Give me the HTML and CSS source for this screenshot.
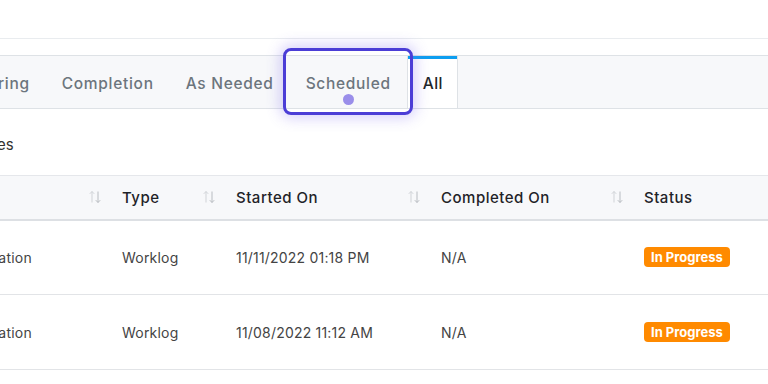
FILE: index.html
```html
<!DOCTYPE html>
<html lang="en">
<head>
    <meta charset="UTF-8">
    <meta name="viewport" content="width=device-width, initial-scale=1.0">
    <title>Activities</title>
    <link rel="stylesheet" href="styles.css">
</head>
<body>
    <div class="topbar"></div>

    <nav class="tabs">
        <div class="tab-list">
            <a class="tab">Recurring</a>
            <a class="tab">Completion</a>
            <a class="tab">As Needed</a>
            <a class="tab tab-focus">Scheduled<span class="focus-dot"></span></a>
            <a class="tab tab-active">All</a>
        </div>
    </nav>

    <div class="caption"><span class="caption-text">All Activities</span></div>

    <div class="table-wrap">
        <table class="grid">
            <colgroup>
                <col class="col-name">
                <col class="col-type">
                <col class="col-start">
                <col class="col-done">
                <col class="col-status">
            </colgroup>
            <thead>
                <tr>
                    <th><div class="th-in"><span>Activity</span><svg class="sort" viewBox="0 0 14 14"><path d="M4 1.5V12.5M1.8 3.8L4 1.5L6.2 3.8" class="up"/><path d="M10 1.5V12.5M7.8 10.2L10 12.5L12.2 10.2" class="down"/></svg></div></th>
                    <th><div class="th-in"><span>Type</span><svg class="sort" viewBox="0 0 14 14"><path d="M4 1.5V12.5M1.8 3.8L4 1.5L6.2 3.8" class="up"/><path d="M10 1.5V12.5M7.8 10.2L10 12.5L12.2 10.2" class="down"/></svg></div></th>
                    <th><div class="th-in"><span>Started On</span><svg class="sort" viewBox="0 0 14 14"><path d="M4 1.5V12.5M1.8 3.8L4 1.5L6.2 3.8" class="up"/><path d="M10 1.5V12.5M7.8 10.2L10 12.5L12.2 10.2" class="down"/></svg></div></th>
                    <th><div class="th-in"><span>Completed On</span><svg class="sort" viewBox="0 0 14 14"><path d="M4 1.5V12.5M1.8 3.8L4 1.5L6.2 3.8" class="up"/><path d="M10 1.5V12.5M7.8 10.2L10 12.5L12.2 10.2" class="down"/></svg></div></th>
                    <th><div class="th-in"><span>Status</span><svg class="sort" viewBox="0 0 14 14"><path d="M4 1.5V12.5M1.8 3.8L4 1.5L6.2 3.8" class="up"/><path d="M10 1.5V12.5M7.8 10.2L10 12.5L12.2 10.2" class="down"/></svg></div></th>
                </tr>
            </thead>
            <tbody>
                <tr>
                    <td>Equipment Calibration</td>
                    <td>Worklog</td>
                    <td>11/11/2022 01:18 PM</td>
                    <td>N/A</td>
                    <td><span class="badge">In Progress</span></td>
                </tr>
                <tr>
                    <td>Equipment Calibration</td>
                    <td>Worklog</td>
                    <td>11/08/2022 11:12 AM</td>
                    <td>N/A</td>
                    <td><span class="badge">In Progress</span></td>
                </tr>
            </tbody>
        </table>
    </div>
</body>
</html>
```

FILE: styles.css
```css
* {
    box-sizing: border-box;
}

body {
    margin: 0;
    font-family: Inter, "Open Sans", sans-serif;
    background: #fff;
    color: #212529;
    overflow: hidden;
}

.topbar {
    height: 39px;
    border-bottom: 1px solid #e9ecef;
    margin-bottom: 16px;
}

/* Tabs */
.tabs {
    height: 54px;
    border-top: 1px solid #dee2e6;
    border-bottom: 1px solid #dee2e6;
    background: #f7f8fa;
}

.tab-list {
    display: flex;
    height: 100%;
    margin-left: -65px;
}

.tab {
    position: relative;
    display: flex;
    align-items: center;
    padding: 2px 15px 0;
    font-size: 15.5px;
    font-weight: 500;
    letter-spacing: 0.7px;
    color: #6c757d;
    border-left: 1px solid transparent;
    border-right: 1px solid transparent;
    white-space: nowrap;
}

.tab-active {
    background: #fff;
    color: #212529;
    padding: 2px 14px 0 15px;
    letter-spacing: 0.4px;
    border-left-color: #dee2e6;
    border-right-color: #dee2e6;
    box-shadow: inset 0 3px 0 #0d9ef0;
}

.tab-focus::after {
    content: '';
    position: absolute;
    top: -8px;
    bottom: -7px;
    left: -8px;
    right: -7px;
    border: 3px solid #4b3dd6;
    border-radius: 8px;
    box-shadow: 0 0 14px 3px rgba(120, 100, 240, 0.3);
    z-index: 2;
}

.focus-dot {
    position: absolute;
    left: 50%;
    bottom: 3px;
    width: 11px;
    height: 11px;
    margin-left: -5px;
    border-radius: 50%;
    background: #9a8eea;
}

/* Caption */
.caption {
    height: 66px;
    padding-top: 5px;
    display: flex;
    align-items: center;
    font-size: 15px;
    color: #333;
    overflow: hidden;
}

.caption-text {
    margin-left: -73px;
    white-space: nowrap;
}

/* Table */
.table-wrap {
    overflow: hidden;
}

.grid {
    border-collapse: collapse;
    table-layout: fixed;
    width: 1000px;
    margin-left: -132px;
}

.col-name { width: 240px; }
.col-type { width: 114px; }
.col-start { width: 205px; }
.col-done { width: 203px; }
.col-status { width: 238px; }

.grid thead tr {
    height: 44px;
    background: #f7f8fa;
    border-top: 1px solid #e5e7eb;
    border-bottom: 2px solid #dde0e4;
}

.grid th {
    padding: 0 6px 0 14px;
    font-size: 15px;
    font-weight: 500;
    letter-spacing: 0.5px;
    text-align: left;
    color: #1f2328;
}

.th-in {
    display: flex;
    align-items: center;
    justify-content: space-between;
}

.sort {
    width: 14px;
    height: 14px;
    fill: none;
    stroke-width: 1;
}

.sort .up {
    stroke: #d0d3d7;
}

.sort .down {
    stroke: #b8bcc1;
}

.grid tbody tr {
    height: 75px;
    border-bottom: 1px solid #e2e4e7;
}

.grid td {
    padding: 0 6px 0 14px;
    font-size: 14px;
    letter-spacing: 0.2px;
    color: #444;
    white-space: nowrap;
}

.badge {
    display: inline-block;
    padding: 0 7px;
    line-height: 20px;
    border-radius: 4px;
    background: #ff8a00;
    color: #fff;
    font-size: 13px;
    font-weight: 700;
    letter-spacing: 0;
}
```
